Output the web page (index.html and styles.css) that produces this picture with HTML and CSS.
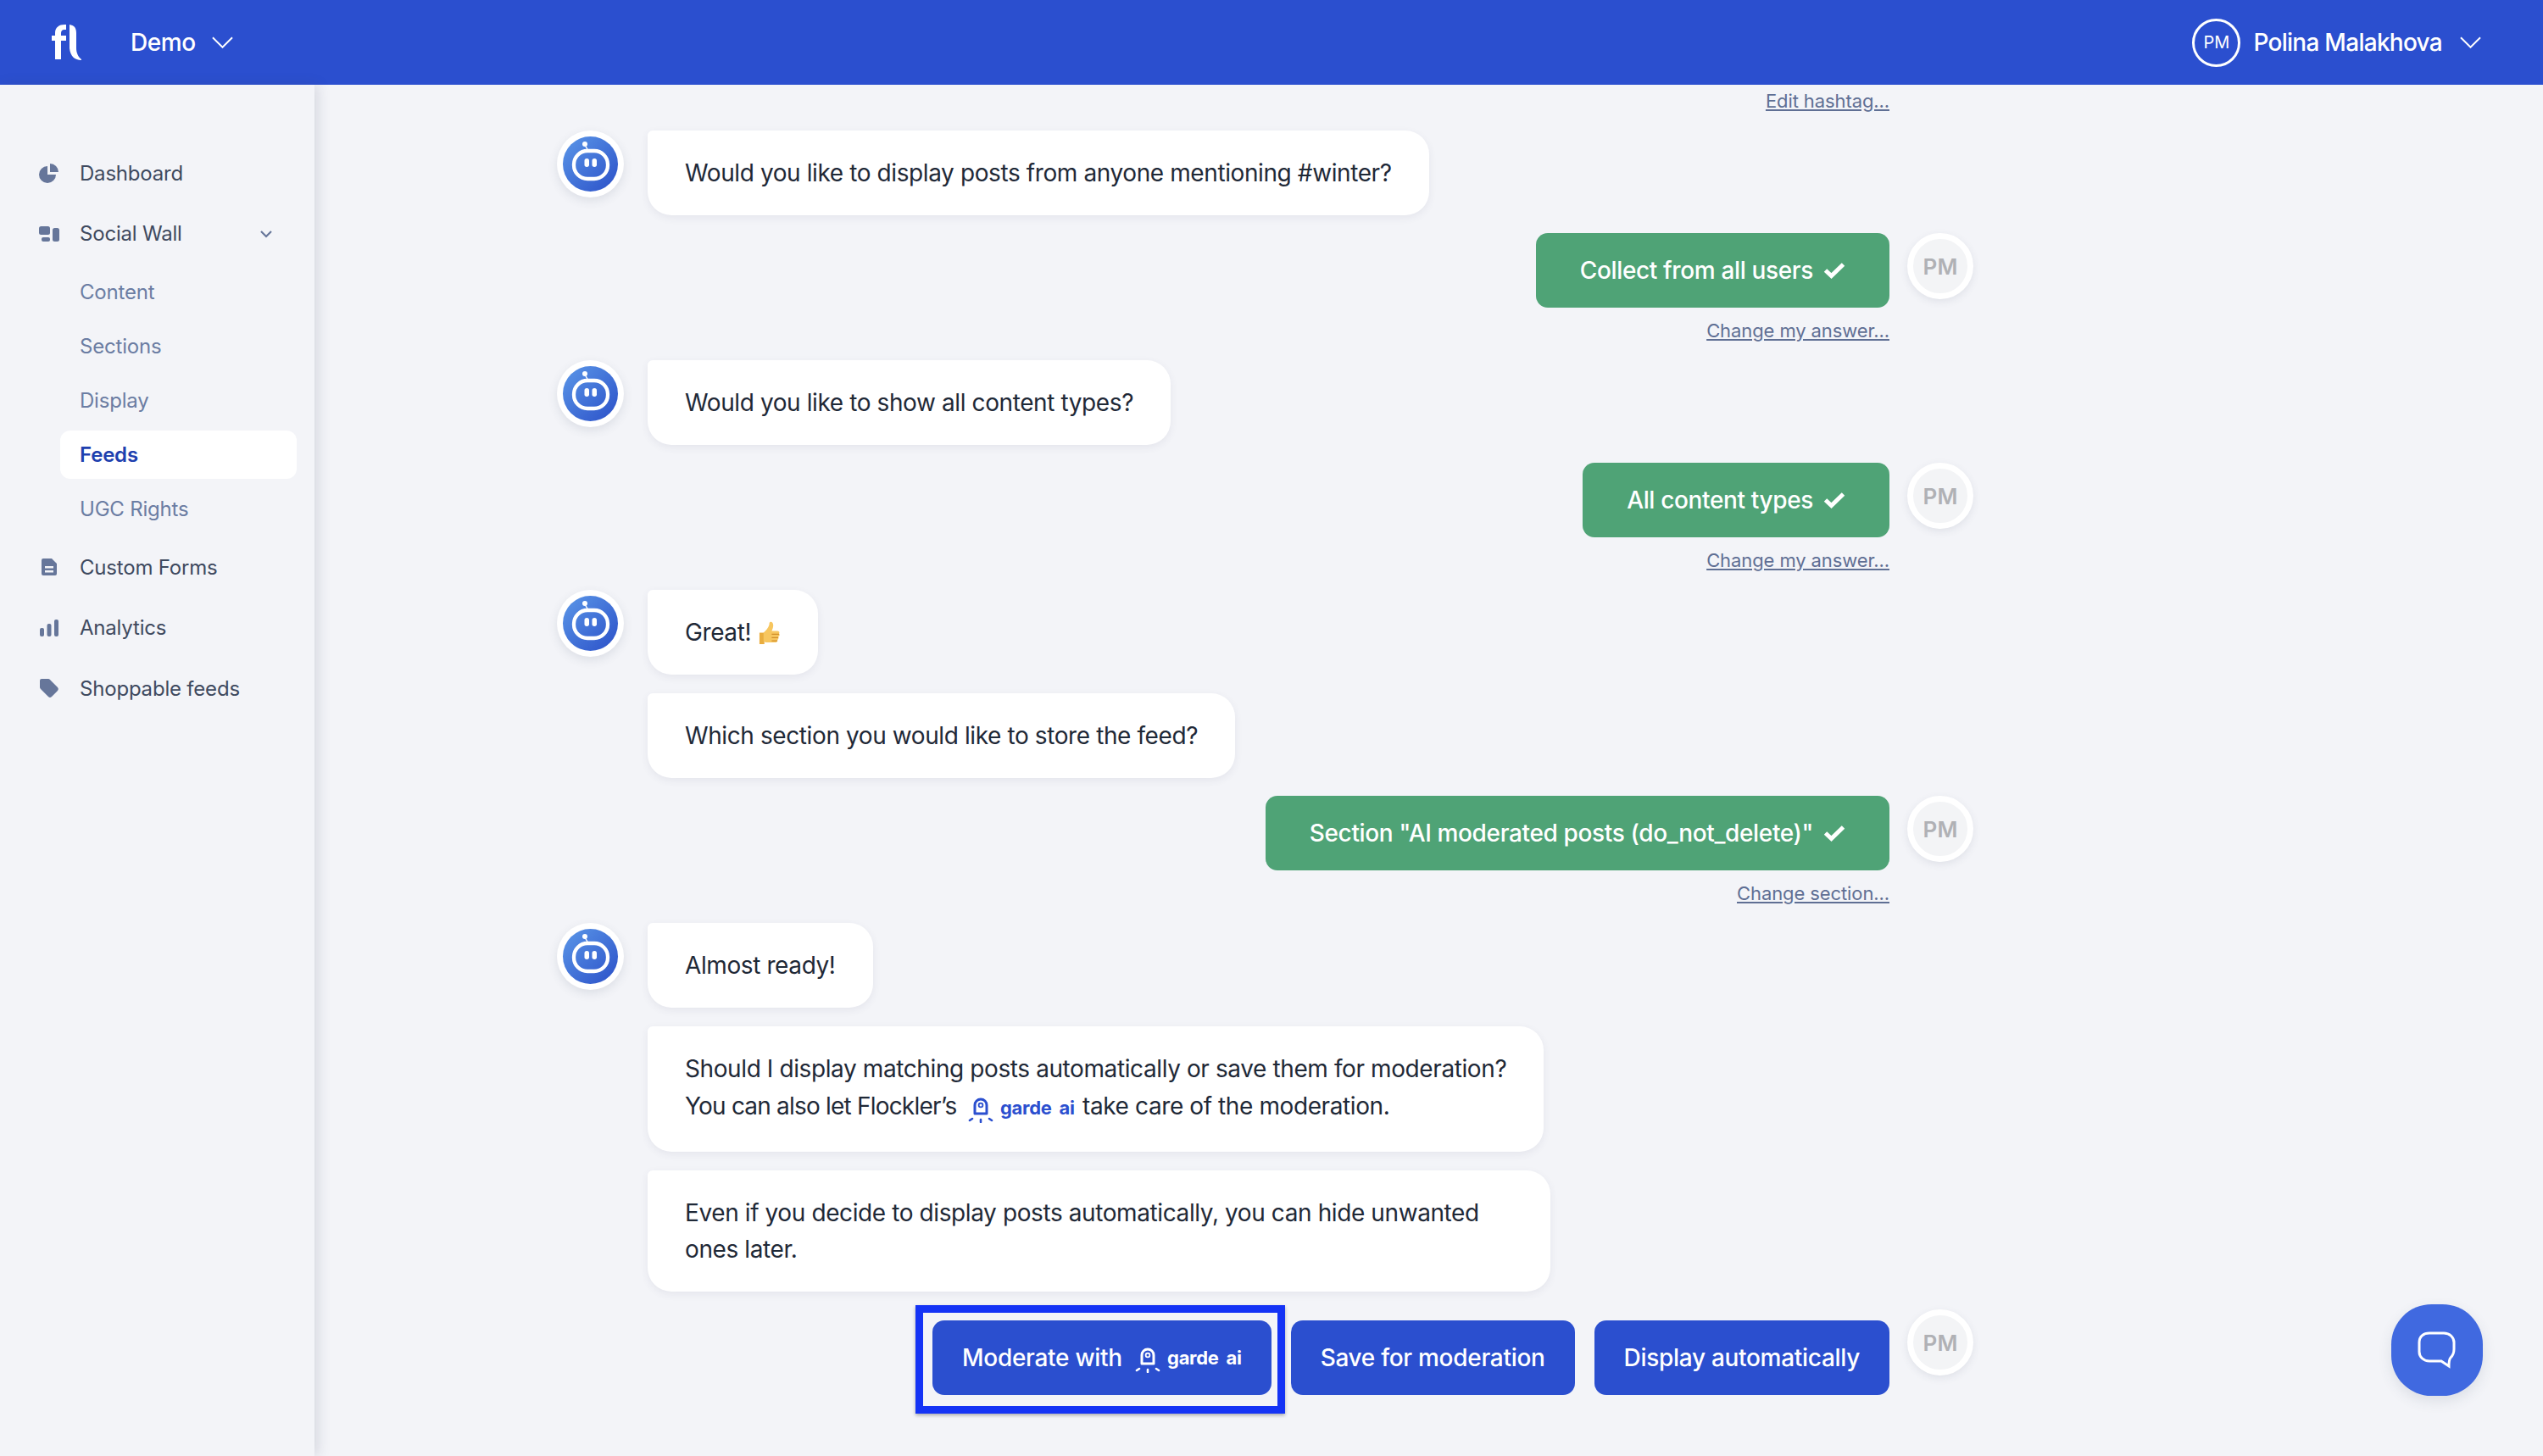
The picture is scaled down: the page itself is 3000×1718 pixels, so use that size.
FILE: index.html
```html
<!DOCTYPE html>
<html lang="en">
<head>
    <meta charset="UTF-8">
    <title>Flockler - New feed</title>
    <link rel="stylesheet" href="styles.css">
</head>
<body>
    <svg class="sprites" aria-hidden="true">
        <defs>
            <linearGradient id="botFill" x1="0" y1="0" x2="1" y2="1">
                <stop offset="0" stop-color="#5b97e8"/>
                <stop offset="1" stop-color="#2b50c8"/>
            </linearGradient>
        </defs>
        <symbol id="bot" viewBox="0 0 79 79">
            <circle cx="39.5" cy="39.5" r="32.5" fill="url(#botFill)"/>
            <path d="M33 17l4 7" stroke="#fff" stroke-width="1.5"/>
            <circle cx="33" cy="16" r="3" fill="#fff"/>
            <rect x="20" y="24" width="40" height="33" rx="16" fill="none" stroke="#fff" stroke-width="4.300"/>
            <rect x="32.5" y="33" width="5.5" height="10" rx="2.7" fill="#fff"/>
            <rect x="41.5" y="33" width="5.5" height="10" rx="2.7" fill="#fff"/>
        </symbol>
        <symbol id="check" viewBox="0 0 26 20">
            <path d="M2.5 10l7 6.500L23.500 3" fill="none" stroke="#fff" stroke-width="5"/>
        </symbol>
        <symbol id="garde" viewBox="0 0 30 32">
            <path d="M8 21V11a7 7 0 0 1 14 0v10z" fill="none" stroke="currentColor" stroke-width="3" stroke-linejoin="round"/>
            <circle cx="15" cy="11" r="2.4" fill="none" stroke="currentColor" stroke-width="1.8"/>
            <path d="M2 29l3-2M15 28v3M28 29l-3-2" fill="none" stroke="currentColor" stroke-width="2.6" stroke-linecap="round"/>
        </symbol>
        <symbol id="chevron" viewBox="0 0 26 14">
            <path d="M1 1l12 12L25 1" fill="none" stroke="#fff" stroke-width="2"/>
        </symbol>
    </svg>

    <header class="topbar">
        <div class="topbar-left">
            <svg class="logo" viewBox="0 0 36 44">
                <path d="M0 14h4V11C4 4 9 1 15 1h2v6h-2c-3 0-4 2-4 4v3h6v6h-6v22H4V20H0z" fill="#fff"/>
                <path d="M21 1c5 1 8 3 8 10v18c0 5 2 10 6 13v1c-8 0-13-5-14-14z" fill="#fff"/>
            </svg>
            <span class="account">Demo</span>
            <svg class="chevron"><use href="#chevron"/></svg>
        </div>
        <div class="topbar-right">
            <span class="user-badge">PM</span>
            <span class="user-name">Polina Malakhova</span>
            <svg class="chevron"><use href="#chevron"/></svg>
        </div>
    </header>

    <div class="layout">
        <nav class="sidebar">
            <a class="nav-item">
                <svg class="nav-icon" viewBox="0 0 24 24"><path d="M10 4a10 10 0 1 0 10 10H10z" fill="#66769a"/><path d="M13 1a10 10 0 0 1 10 10H13z" fill="#66769a"/></svg>
                Dashboard
            </a>
            <a class="nav-item">
                <svg class="nav-icon" viewBox="0 0 24 24"><rect x="0" y="3" width="13" height="10" rx="2.5" fill="#66769a"/><rect x="3" y="16" width="10" height="5" rx="2" fill="#66769a"/><rect x="16" y="5" width="8" height="16" rx="2.5" fill="#66769a"/></svg>
                Social Wall
                <svg class="nav-caret" viewBox="0 0 16 10"><path d="M2 2l6 6 6-6" fill="none" stroke="#66769a" stroke-width="2.2"/></svg>
            </a>
            <div class="subnav">
                <a class="sub-item">Content</a>
                <a class="sub-item">Sections</a>
                <a class="sub-item">Display</a>
                <a class="sub-item active">Feeds</a>
                <a class="sub-item">UGC Rights</a>
            </div>
            <a class="nav-item">
                <svg class="nav-icon" viewBox="0 0 24 24"><path fill-rule="evenodd" d="M5 2h10l6 6v12a2 2 0 0 1-2 2H5a2 2 0 0 1-2-2V4a2 2 0 0 1 2-2zM7 11v2.500h10V11zM7 16v2.500h10V16z" fill="#66769a"/></svg>
                Custom Forms
            </a>
            <a class="nav-item">
                <svg class="nav-icon" viewBox="0 0 24 24"><rect x="1" y="12" width="5" height="10" rx="2" fill="#66769a"/><rect x="9.500" y="7" width="5" height="15" rx="2" fill="#66769a"/><rect x="18" y="2" width="5" height="20" rx="2" fill="#66769a"/></svg>
                Analytics
            </a>
            <a class="nav-item">
                <svg class="nav-icon" viewBox="0 0 24 24"><path fill-rule="evenodd" d="M3 1h8a3 3 0 0 1 2 1l9 9a3 3 0 0 1 0 4l-7 7a3 3 0 0 1-4 0l-9-9a3 3 0 0 1-1-2V3a2 2 0 0 1 2-2z" fill="#66769a"/></svg>
                Shoppable feeds
            </a>
        </nav>

        <main class="chat">
            <div class="change"><a>Edit hashtag...</a></div>

            <div class="bot-row">
                <svg class="bot-avatar"><use href="#bot"/></svg>
                <div class="bubbles">
                    <div class="bubble">Would you like to display posts from anyone mentioning #winter?</div>
                </div>
            </div>
            <div class="user-row">
                <div class="answer">Collect from all users <svg class="check"><use href="#check"/></svg></div>
                <span class="user-avatar">PM</span>
            </div>
            <div class="change"><a>Change my answer...</a></div>

            <div class="bot-row">
                <svg class="bot-avatar"><use href="#bot"/></svg>
                <div class="bubbles">
                    <div class="bubble">Would you like to show all content types?</div>
                </div>
            </div>
            <div class="user-row">
                <div class="answer">All content types <svg class="check"><use href="#check"/></svg></div>
                <span class="user-avatar">PM</span>
            </div>
            <div class="change"><a>Change my answer...</a></div>

            <div class="bot-row">
                <svg class="bot-avatar"><use href="#bot"/></svg>
                <div class="bubbles">
                    <div class="bubble">Great!
                        <svg class="thumb" viewBox="0 0 28 30">
                            <path d="M2 14h6v14H2z" fill="#e9ad3f"/>
                            <path d="M7 14c3-3 6-6 7-10 0-3 1-4 3-3 3 2 2 7 0 11h7c2 0 3 2 2 3 1 2 1 3-1 4 1 2 0 3-1 4 0 2-1 3-3 3H12c-3 0-5-1-5-2z" fill="#f7c65f"/>
                            <path d="M17 16h9M17 20h8M17 24h7" stroke="#d18f2b" stroke-width="1.3"/>
                        </svg>
                    </div>
                    <div class="bubble">Which section you would like to store the feed?</div>
                </div>
            </div>
            <div class="user-row">
                <div class="answer">Section "AI moderated posts (do_not_delete)" <svg class="check"><use href="#check"/></svg></div>
                <span class="user-avatar">PM</span>
            </div>
            <div class="change"><a>Change section...</a></div>

            <div class="bot-row">
                <svg class="bot-avatar"><use href="#bot"/></svg>
                <div class="bubbles">
                    <div class="bubble">Almost ready!</div>
                    <div class="bubble">Should I display matching posts automatically or save them for moderation?<br>
                        <span class="tight">You can also let Flockler’s</span>
                        <span class="garde"><svg class="garde-icon"><use href="#garde"/></svg>garde ai</span>
                        take care of the moderation.</div>
                    <div class="bubble wide">Even if you decide to display posts automatically, you can hide unwanted ones later.</div>
                </div>
            </div>
            <div class="user-row actions">
                <button class="action highlighted">Moderate with <span class="garde"><svg class="garde-icon"><use href="#garde"/></svg>garde ai</span></button>
                <button class="action">Save for moderation</button>
                <button class="action">Display automatically</button>
                <span class="user-avatar">PM</span>
            </div>
        </main>
    </div>

    <div class="help-button">
        <svg viewBox="0 0 46 46" width="46" height="46"><path d="M14 3h17c7 0 12 5 12 11v8c0 5-2 8-4 10-2 2-2 5-2 10l-9-6H14C7 36 2 31 2 25V14C2 7 7 3 14 3z" fill="none" stroke="#fff" stroke-width="3"/></svg>
    </div>
</body>
</html>
```
FILE: styles.css
```css
* {
    box-sizing: border-box;
}
html, body {
    margin: 0;
    height: 1718px;
    overflow: hidden;
}
body {
    font-family: Inter, "Liberation Sans", sans-serif;
    background-color: #f3f4f8;
    color: #1f2937;
}
.sprites {
    position: absolute;
    width: 0;
    height: 0;
}

/* top bar */
.topbar {
    height: 100px;
    background-color: #2b4fcf;
    color: #fff;
    display: flex;
    justify-content: space-between;
    align-items: center;
    padding: 0 73px 0 61px;
    font-size: 28px;
    font-weight: 500;
}
.topbar-left, .topbar-right {
    display: flex;
    align-items: center;
}
.logo {
    width: 36px;
    height: 44px;
}
.account {
    margin-left: 57px;
    letter-spacing: -0.4px;
}
.account + .chevron {
    margin-left: 19px;
}
.user-name {
    letter-spacing: -0.72px;
}
.chevron {
    width: 25px;
    height: 14px;
    margin-left: 21px;
}
.user-badge {
    width: 57px;
    height: 57px;
    border: 3px solid #fff;
    border-radius: 50%;
    display: flex;
    align-items: center;
    justify-content: center;
    font-size: 20px;
    font-weight: 400;
    margin-right: 15px;
}

/* sidebar */
.layout {
    display: flex;
    height: 1618px;
}
.sidebar {
    width: 371px;
    flex-shrink: 0;
    padding: 86px 21px 0 46px;
    box-shadow: 4px 0 14px rgba(60, 70, 100, 0.16);
}
.nav-item {
    display: flex;
    align-items: center;
    height: 36px;
    margin-bottom: 35.500px;
    font-size: 24px;
    letter-spacing: -0.2px;
    color: #3f4a5f;
}
.nav-icon {
    width: 24px;
    height: 24px;
    margin-right: 24px;
    flex-shrink: 0;
}
.nav-caret {
    width: 16px;
    height: 10px;
    margin-left: auto;
    margin-right: 28px;
}
.subnav {
    margin: -13px 0 22px -46px;
    padding-left: 71px;
}
.sub-item {
    display: flex;
    align-items: center;
    height: 57px;
    margin-bottom: 7px;
    padding-left: 23px;
    font-size: 24px;
    letter-spacing: -0.2px;
    color: #6b7da3;
    border-radius: 12px;
}
.sub-item.active {
    background: #fff;
    color: #1e40af;
    font-weight: 600;
}

/* chat */
.chat {
    width: 1671px;
    margin-left: 286px;
    padding-top: 6px;
}
.change {
    text-align: right;
    padding-right: 99px;
    margin-top: 14px;
    font-size: 22px;
    line-height: 27px;
    letter-spacing: -0.1px;
    color: #5f6f94;
    text-decoration: underline;
}
.chat > .change:first-child {
    margin-top: 0;
}
.bot-row {
    display: flex;
    margin-top: 21px;
}
.bot-avatar {
    width: 79px;
    height: 79px;
    flex-shrink: 0;
    background: #fff;
    border-radius: 50%;
    box-shadow: 0 4px 12px rgba(60, 70, 100, 0.12);
    margin-right: 28px;
}
.bubbles {
    display: flex;
    flex-direction: column;
    align-items: flex-start;
    gap: 22px;
}
.bubble {
    background: #fff;
    padding: 29px 44px 28px;
    font-size: 28px;
    line-height: 43px;
    letter-spacing: -0.4px;
    border-radius: 6px 28px 28px 28px;
    box-shadow: 0 3px 10px rgba(60, 70, 100, 0.08);
}
.bubble.wide {
    width: 1065px;
}
.tight {
    letter-spacing: -0.8px;
}
.thumb {
    width: 27px;
    height: 29px;
    vertical-align: -6px;
}
.garde {
    display: inline-flex;
    align-items: center;
    height: 48px;
    vertical-align: middle;
    margin: 0 2px 0 6px;
    color: #2b4fcf;
    font-size: 22px;
    font-weight: 700;
    letter-spacing: -0.3px;
    word-spacing: 4px;
}
.garde-icon {
    width: 30px;
    height: 32px;
    margin-right: 8px;
    margin-top: 4px;
}
.user-row {
    display: flex;
    justify-content: flex-end;
    align-items: flex-start;
    margin-top: 21px;
}
.answer {
    height: 88px;
    display: flex;
    align-items: center;
    gap: 12px;
    padding: 0 52px;
    background-color: #4fa376;
    color: #fff;
    font-size: 28px;
    font-weight: 500;
    letter-spacing: -0.36px;
    border-radius: 14px;
}
.check {
    width: 26px;
    height: 20px;
}
.user-avatar {
    width: 78px;
    height: 78px;
    flex-shrink: 0;
    margin-left: 21px;
    border: 7px solid #fff;
    border-radius: 50%;
    background: #f3f4f6;
    box-shadow: 0 3px 10px rgba(60, 70, 100, 0.1);
    color: #b0b1b5;
    font-size: 26px;
    font-weight: 600;
    display: flex;
    align-items: center;
    justify-content: center;
}

/* answer buttons */
.actions {
    gap: 23px;
    margin-top: 34px;
}
.actions .user-avatar {
    margin-left: -2px;
    margin-top: -13px;
}
.action {
    height: 88px;
    padding: 0 35px;
    border: none;
    border-radius: 14px;
    background-color: #2b4fcf;
    color: #fff;
    font-family: inherit;
    font-size: 28px;
    font-weight: 500;
    letter-spacing: -0.3px;
    display: flex;
    align-items: center;
    white-space: pre;
}
.action .garde {
    color: #fff;
    margin: 0 0 0 8px;
}
.highlighted {
    position: relative;
}
.highlighted::after {
    content: "";
    position: absolute;
    inset: -18px -16px -22px -20px;
    border: 9px solid #1433f5;
    box-shadow: 0 2px 4px rgba(0, 0, 0, 0.3);
}

.help-button {
    position: fixed;
    left: 2821px;
    top: 1539px;
    width: 108px;
    height: 108px;
    border-radius: 44%;
    background-color: #4069e0;
    box-shadow: 0 6px 16px rgba(60, 70, 100, 0.12);
    display: flex;
    align-items: center;
    justify-content: center;
}
```
